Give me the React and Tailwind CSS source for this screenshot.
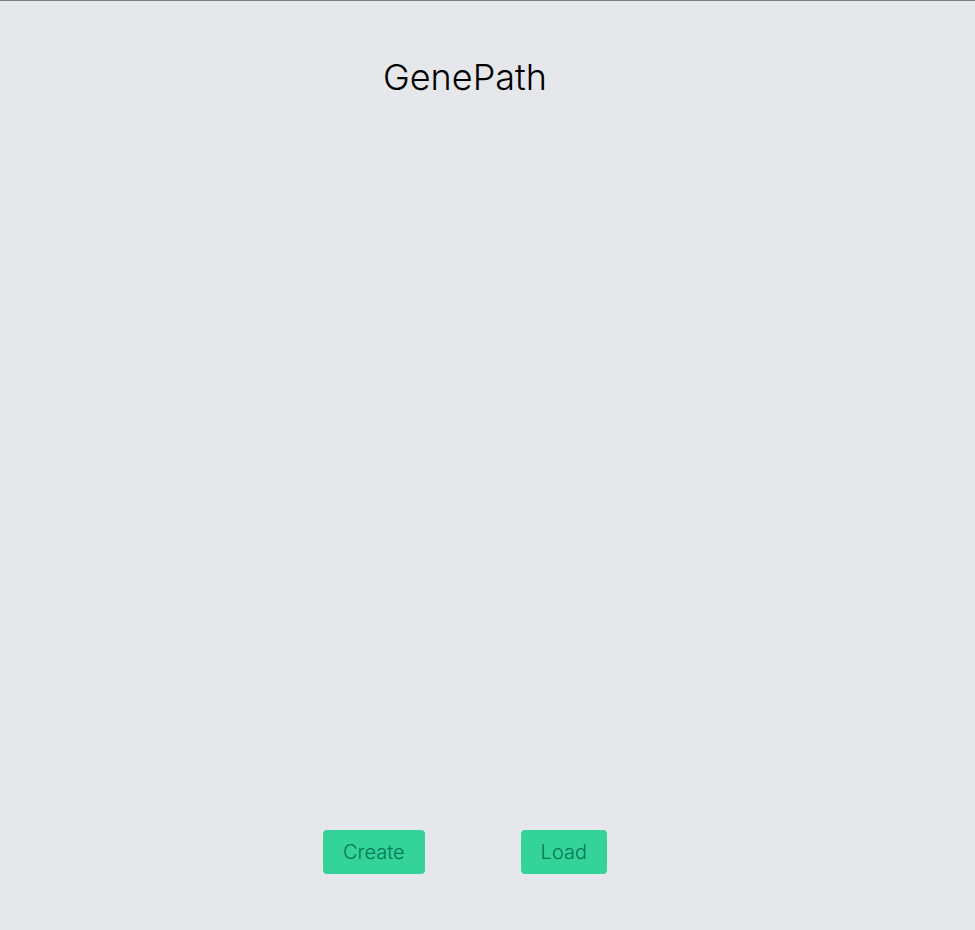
export default function App() {
  return (
    <main className="flex min-h-screen flex-col items-center justify-between border-t border-[#7c7e83] bg-[#e5e7eb] pt-14 pr-[45px] pb-14 font-['Inter',sans-serif] font-light text-black">
      <h1 className="text-4xl leading-10">GenePath</h1>
      <div className="flex gap-24">
        <button type="button" className="rounded-sm bg-[#34d399] px-5 py-2 text-xl leading-7 text-[#047857]">
          Create
        </button>
        <button type="button" className="rounded-sm bg-[#34d399] px-5 py-2 text-xl leading-7 text-[#047857]">
          Load
        </button>
      </div>
    </main>
  );
}
